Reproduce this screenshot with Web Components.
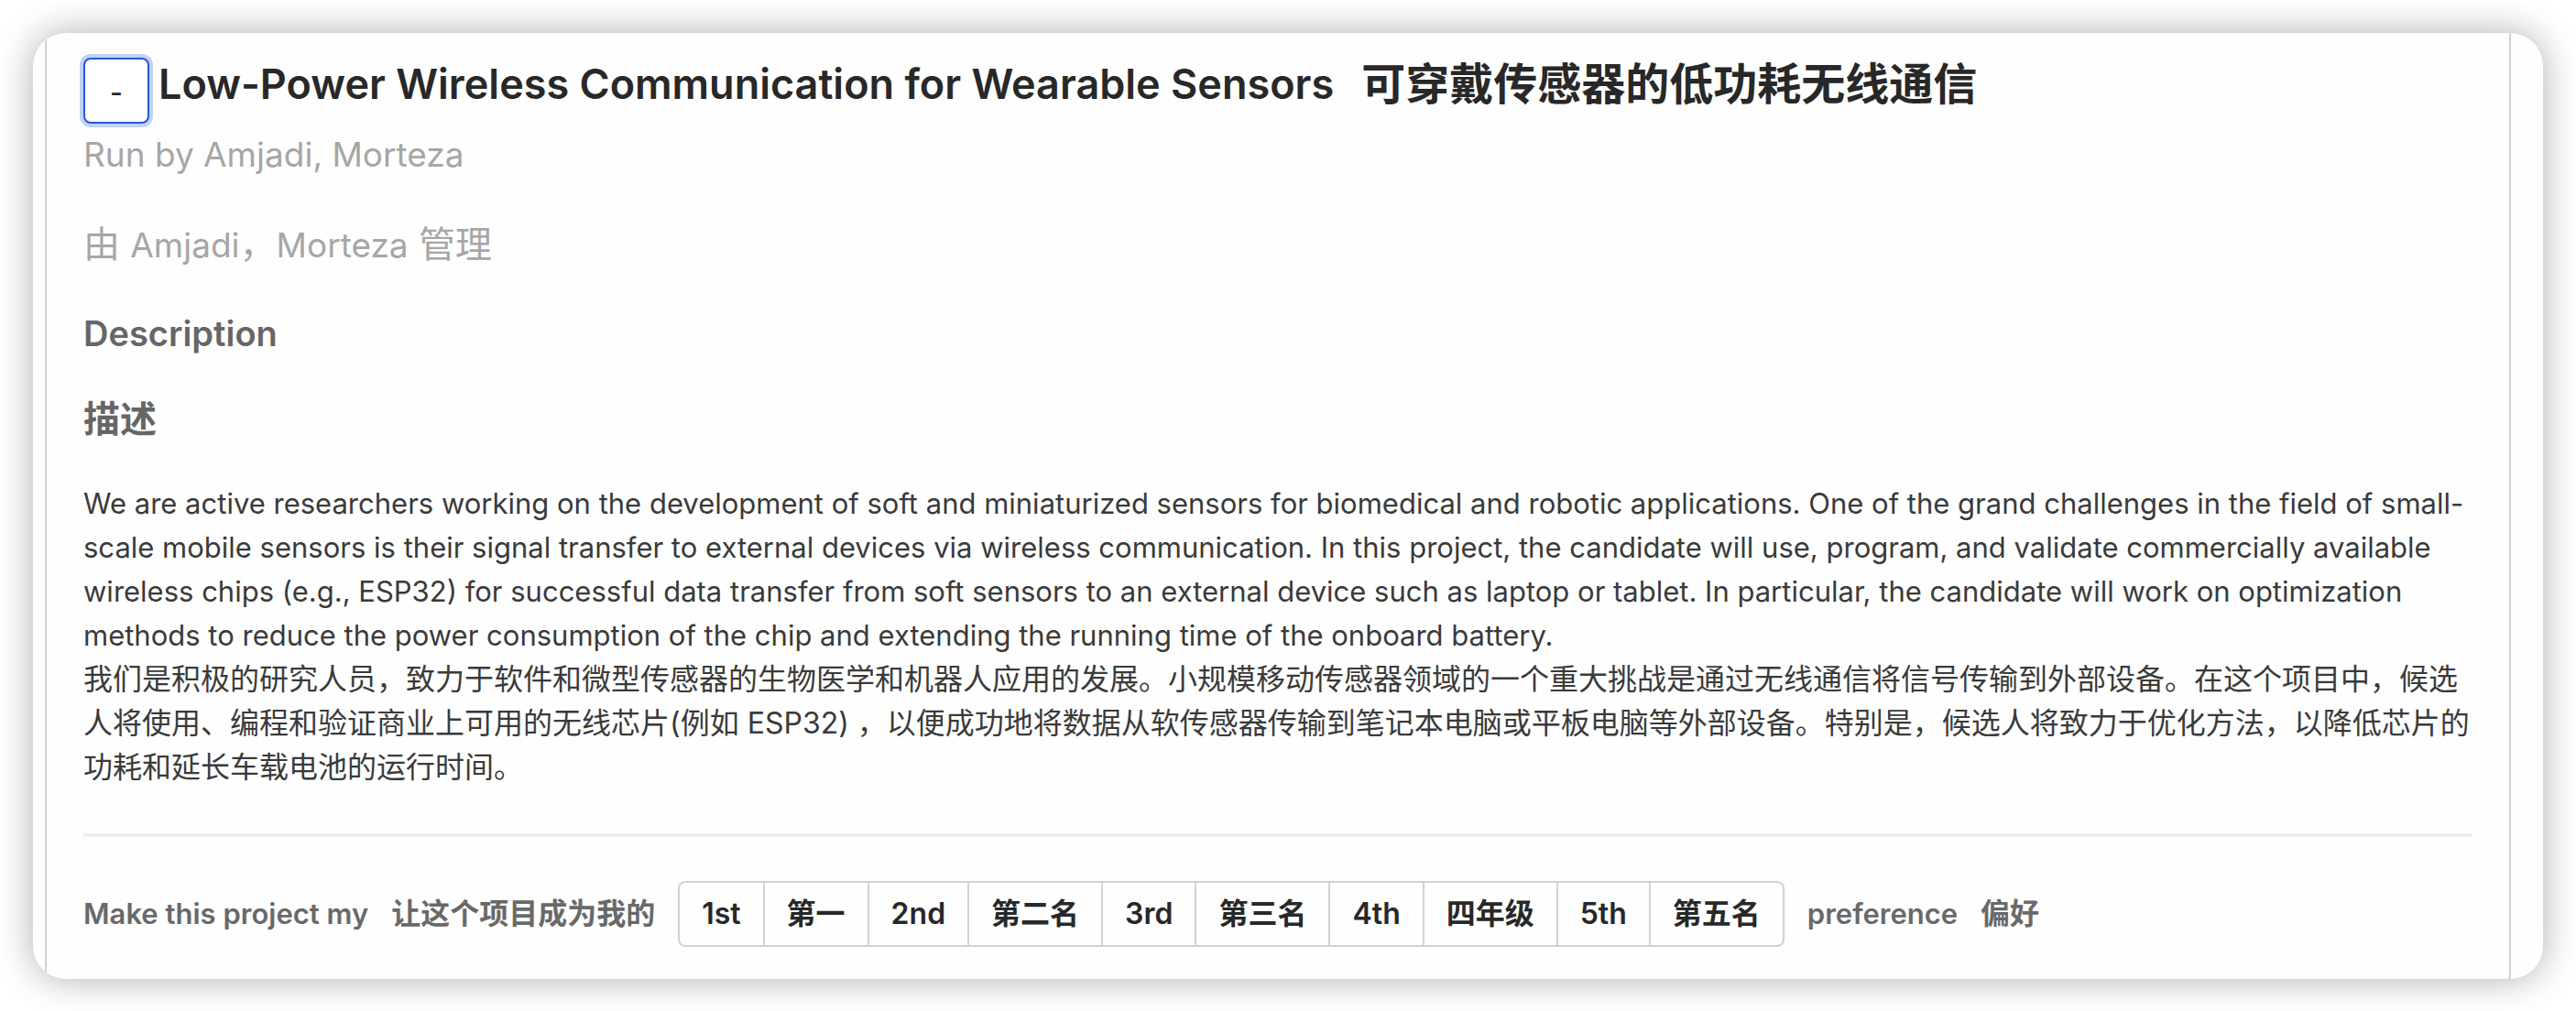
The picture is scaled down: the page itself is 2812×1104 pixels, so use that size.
<!DOCTYPE html>
<html lang="en">
<head>
<meta charset="utf-8">
<title>Low-Power Wireless Communication for Wearable Sensors</title>
<style>
  body {
    margin: 0;
    padding: 36px;
    background: #fff;
    color: #3a3a3a;
    font-family: Inter, "Noto Sans CJK SC", sans-serif;
    font-size: 32px;
    line-height: 48px;
    --line: #d2d2d2;
    --ink: #282828;
    --label: #696969;
  }
  .en { font-size: 31px; }
</style>
</head>
<body>
<project-card>
  <project-heading slot="heading">
    <span slot="en">Low-Power Wireless Communication for Wearable Sensors</span>
    <span slot="zh" lang="zh-CN">可穿戴传感器的低功耗无线通信</span>
  </project-heading>
  <project-owner slot="owner"></project-owner>
  <project-description slot="description">
    <div class="en">We are active researchers working on the development of soft and miniaturized sensors for biomedical and robotic applications. One of the grand challenges in the field of small-scale mobile sensors is their signal transfer to external devices via wireless communication. In this project, the candidate will use, program, and validate commercially available wireless chips (e.g., ESP32) for successful data transfer from soft sensors to an external device such as laptop or tablet. In particular, the candidate will work on optimization methods to reduce the power consumption of the chip and extending the running time of the onboard battery.</div>
    <div lang="zh-CN">我们是积极的研究人员，致力于软件和微型传感器的生物医学和机器人应用的发展。小规模移动传感器领域的一个重大挑战是通过无线通信将信号传输到外部设备。在这个项目中，候选人将使用、编程和验证商业上可用的无线芯片(例如 ESP32) ，以便成功地将数据从软传感器传输到笔记本电脑或平板电脑等外部设备。特别是，候选人将致力于优化方法，以降低芯片的功耗和延长车载电池的运行时间。</div>
  </project-description>
  <preference-picker slot="preference"></preference-picker>
</project-card>

<script>
class BaseElement extends HTMLElement {
  constructor() {
    super();
    this.attachShadow({ mode: "open" }).innerHTML = this.constructor.markup;
  }
}

customElements.define("project-card", class extends BaseElement {
  static markup = `
    <style>
      :host { display: block; overflow: hidden; background: #fefefe; border-radius: 36px;
              box-shadow: 0 0 40px rgba(0,0,0,.32); }
      .panel { display: flex; flex-direction: column; margin: 0 35px -4px 13px; padding: 27px 40px 37px;
               border: 2px solid var(--line); border-top: 0; border-radius: 0 0 8px 8px; }
      hr { width: 100%; height: 4px; margin: 48px 0; border: 0; background: #f0f0f0; }
    </style>
    <article class="panel">
      <slot name="heading"></slot>
      <slot name="owner"></slot>
      <slot name="description"></slot>
      <hr>
      <slot name="preference"></slot>
    </article>`;
});

customElements.define("project-heading", class extends BaseElement {
  static markup = `
    <style>
      :host { display: block; margin-bottom: 4px; }
      header { display: flex; gap: 10px; }
      button { flex: none; width: 72px; height: 72px; padding: 4px 0 0; border: 2px solid #2459d6;
               border-radius: 8px; background: #fff; box-shadow: 0 0 0 4px #c2d1f5;
               color: var(--ink); font: 500 30px/32px Inter, sans-serif; }
      h1 { display: flex; gap: 30px; margin: 0; color: var(--ink); font-weight: 600;
           font-size: 48px; line-height: 58px; }
      .latin { font-size: 45px; }
    </style>
    <header>
      <button type="button" aria-label="Collapse">-</button>
      <h1><span class="latin"><slot name="en"></slot></span><slot name="zh"></slot></h1>
    </header>`;
});

customElements.define("project-owner", class extends BaseElement {
  static markup = `
    <style>
      :host { display: block; margin-bottom: 36px; color: #a6a6a6; font-size: 40px; line-height: 60px; }
      p { margin: 0; }
      p + p { margin-top: 38px; }
      .latin { font-size: 37px; }
    </style>
    <p class="latin">Run by Amjadi, Morteza</p>
    <p lang="zh-CN">由 <span class="latin">Amjadi</span>，<span class="latin">Morteza</span> 管理</p>`;
});

customElements.define("project-description", class extends BaseElement {
  static markup = `
    <style>
      :host { display: block; }
      h2 { margin: 0 0 34px; color: #666; font-weight: 600; font-size: 40px; line-height: 60px; }
      h2 + h2 { margin-bottom: 38px; }
      .latin { font-size: 38px; }
    </style>
    <h2 class="latin">Description</h2>
    <h2 lang="zh-CN">描述</h2>
    <slot></slot>`;
});

customElements.define("preference-picker", class extends BaseElement {
  static markup = `
    <style>
      :host { display: flex; align-items: center; gap: 25px; color: var(--label); font-weight: 600; }
      .latin { font-size: 31px; }
      .group { display: flex; border: 2px solid var(--line); border-radius: 8px; }
      button { height: 68px; padding: 0 24px; border: 0; background: none; color: var(--ink);
               font: inherit; }
      button + button { border-left: 2px solid var(--line); }
    </style>
    <span class="latin">Make this project my</span>
    <span lang="zh-CN">让这个项目成为我的</span>
    <div class="group" role="group" aria-label="Preference">
      <button type="button">1st</button>
      <button type="button" lang="zh-CN">第一</button>
      <button type="button">2nd</button>
      <button type="button" lang="zh-CN">第二名</button>
      <button type="button">3rd</button>
      <button type="button" lang="zh-CN">第三名</button>
      <button type="button">4th</button>
      <button type="button" lang="zh-CN">四年级</button>
      <button type="button">5th</button>
      <button type="button" lang="zh-CN">第五名</button>
    </div>
    <span class="latin">preference</span>
    <span lang="zh-CN">偏好</span>`;
});
</script>
</body>
</html>
